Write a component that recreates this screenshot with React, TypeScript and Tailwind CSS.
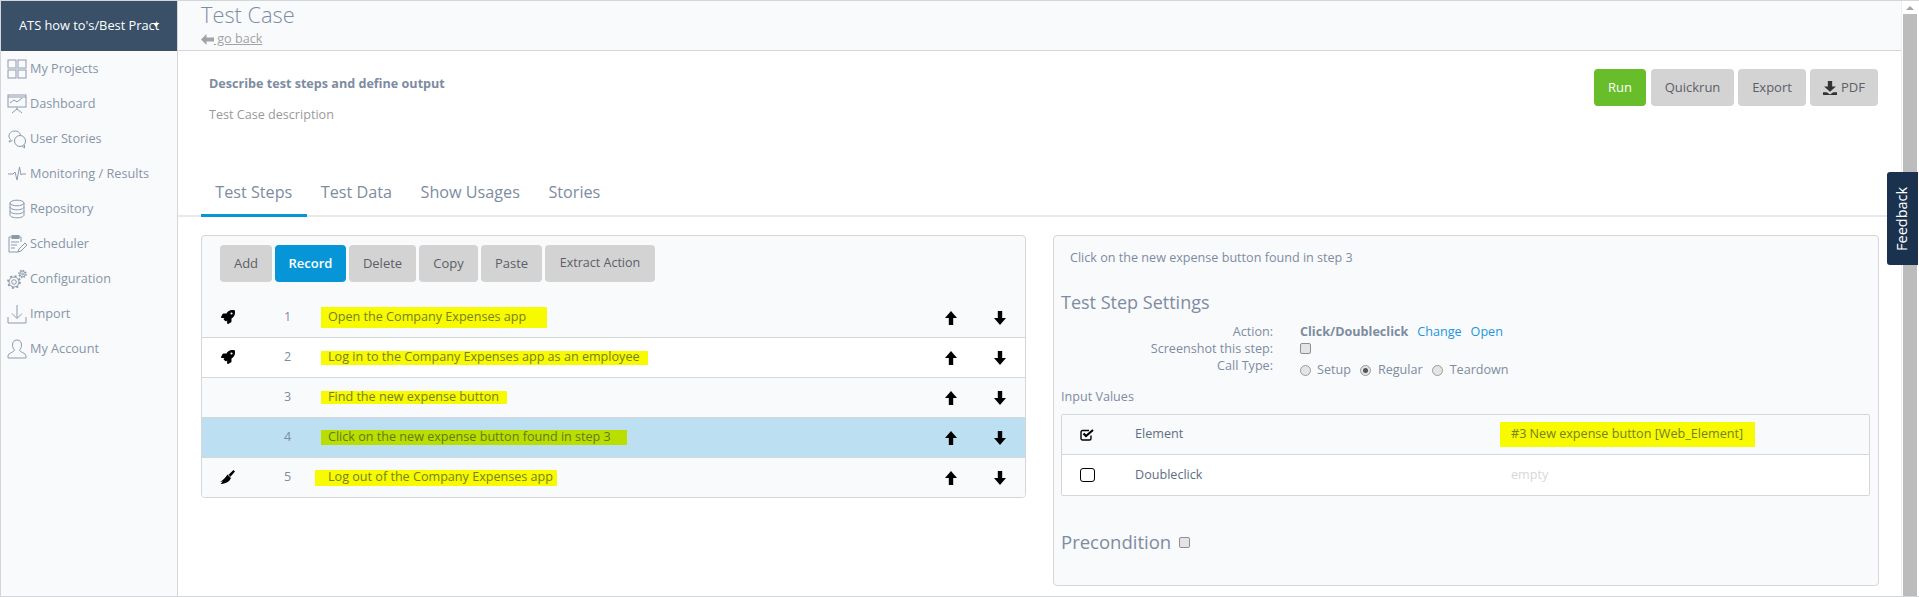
import React from "react";
import { FaRocket } from "react-icons/fa";

const font = { fontFamily: '"Open Sans", "Noto Sans", sans-serif' };

const stroke = { fill: "none", stroke: "#8d9aae", strokeWidth: 1 } as const;
const SideIcons: Record<string, React.ReactNode> = {
  grid: <g {...stroke}><rect x="1" y="1" width="8" height="8" /><rect x="11" y="1" width="8" height="8" /><rect x="1" y="11" width="8" height="8" /><rect x="11" y="11" width="8" height="8" /><path d="M1 9.500h18" stroke="#c5cad3" strokeWidth="2" /></g>,
  dash: <g {...stroke}><rect x="1" y="1" width="18" height="12" /><path d="M3 9l4-3 3 2 5-4M10 13v2M5 19l5-4 5 4" /><path d="M1 3h18" /></g>,
  chat: <g {...stroke}><path d="M8 2c-3.500 0-6 2-6 5 0 1.500.6 2.600 1.500 3.500L2 13l3.500-1.500" /><path d="M8 2c2.500 0 5 1.500 5.500 4" /><circle cx="13" cy="12" r="5.500" /><path d="M15 17l2.500 2v-3" /></g>,
  pulse: <path {...stroke} d="M1 10h5l2-2 2 8 2.500-13L14 11l1-1h4" />,
  db: <g {...stroke}><ellipse cx="10" cy="4" rx="7" ry="2.800" /><path d="M3 4v12c0 1.500 3 2.800 7 2.800s7-1.300 7-2.800V4M3 8c0 1.500 3 2.800 7 2.800s7-1.300 7-2.800M3 12c0 1.500 3 2.800 7 2.800s7-1.300 7-2.800" /></g>,
  sched: <g {...stroke}><path d="M5 3H2v15h9M12 3h2v5" /><rect x="5" y="1.500" width="7" height="3" fill="#8d9aae" /><path d="M4 8h8M4 11h6M4 14h4M11 18l1-3 6-6 2 2-6 6z" /></g>,
  gear: <g {...stroke}><circle cx="7" cy="13" r="5" /><circle cx="7" cy="13" r="6" strokeWidth="1.800" strokeDasharray="2 2.700" /><circle cx="7" cy="13" r="2.300" /><circle cx="15.500" cy="5" r="2.700" /><circle cx="15.500" cy="5" r="3.600" strokeWidth="1.400" strokeDasharray="1.500 1.300" /><circle cx="15.500" cy="5" r="1" /></g>,
  imp: <g {...stroke}><path d="M10 1v13M5 9.500l5 5 5-5M1 13v6h18v-6" /></g>,
  user: <g {...stroke}><path d="M10 1c-3 0-4.500 2-4.500 5 0 2.500 1 4 2 5 0 2-6.500 3-6.500 6v2h18v-2c0-3-6.500-4-6.500-6 1-1 2-2.500 2-5 0-3-1.500-5-4.500-5z" /></g>,
};

const nav: [string, string][] = [
  ["grid", "My Projects"],
  ["dash", "Dashboard"],
  ["chat", "User Stories"],
  ["pulse", "Monitoring / Results"],
  ["db", "Repository"],
  ["sched", "Scheduler"],
  ["gear", "Configuration"],
  ["imp", "Import"],
  ["user", "My Account"],
];

const ArrowUp = () => (
  <svg width="12" height="14" viewBox="0 0 12 14"><path d="M6 0L12 7H8.200V14H3.800V7H0z" fill="#000" /></svg>
);
const ArrowDown = () => (
  <svg width="12" height="14" viewBox="0 0 12 14"><path d="M6 14L12 7H8.200V0H3.800V7H0z" fill="#000" /></svg>
);
const Brush = () => (
  <svg width="15" height="14" viewBox="0 0 15 14"><path d="M13.500 0L15 1.500 10.500 6.800 8.500 4.800z" fill="#000" /><path d="M7.500 4.500L11 8 9.500 10.500C7.500 12.800 4 14 .5 14L2.800 11.500 0 11.800C3 10 5.500 8 7.500 4.500z" fill="#000" /></svg>
);

const Btn = ({ w, children, cls = "bg-[#d3d3d3] text-[#5c6068]" }: { w: string; children: React.ReactNode; cls?: string }) => (
  <button className={`${w} ${cls} h-[37px] rounded-[4px] text-[13px] flex items-center justify-center shrink-0`}>{children}</button>
);

const steps = [
  { n: 1, icon: "rocket", text: "Open the Company Expenses app", hl: "pl-[7px] w-[226px] h-[21px]", bg: "bg-[#f9fafc]" },
  { n: 2, icon: "rocket", text: "Log in to the Company Expenses app as an employee", hl: "pl-[7px] w-[327px] h-[14px]", bg: "bg-white" },
  { n: 3, icon: "", text: "Find the new expense button", hl: "pl-[7px] w-[186px] h-[13px]", bg: "bg-[#f9fafc]" },
  { n: 4, icon: "", text: "Click on the new expense button found in step 3", hl: "pl-[7px] w-[306px] h-[15px]", bg: "bg-[#bce0f2]" },
  { n: 5, icon: "broom", text: "Log out of the Company Expenses app", hl: "-ml-[6px] pl-[13px] w-[242px] h-[16px]", bg: "bg-[#f9fafc]" },
];

export default function App() {
  return (
    <div style={font} className="relative flex h-[597px] w-full overflow-hidden border-y border-l border-[#d4d6da] bg-white text-[13px] text-[#7d8ca1]">
      <aside className="w-[177px] shrink-0 border-r border-[#d4d6da] bg-[#f9fafc]">
        <div className="flex h-[50px] items-center bg-[#3a5068] pb-[1px] pl-[18px] text-[12.800px] text-white">
          <span className="relative whitespace-nowrap">
            ATS how to's/Best Pract
            <span className="absolute right-[0px] top-[7px] h-0 w-0 border-x-[3px] border-t-[4px] border-x-transparent border-t-white" />
          </span>
        </div>
        <nav className="pl-[6px]">
          {nav.map(([k, label]) => (
            <div key={label} className="flex h-[35px] items-center gap-[3px] text-[12.700px] text-[#8795a8]">
              <svg width="20" height="20" viewBox="0 0 20 20" className="shrink-0">{SideIcons[k]}</svg>
              <span>{label}</span>
            </div>
          ))}
        </nav>
      </aside>

      <main className="flex min-w-0 flex-1 flex-col">
        <header className="h-[50px] shrink-0 border-b border-[#d4d6da] bg-[#f9fafc] pl-[23px]">
          <h1 className="-mt-[1px] text-[21.800px] font-light leading-[30px] text-[#7d8ca1]">Test Case</h1>
          <div className="flex items-center text-[12.600px] leading-[18px] text-[#a3a3a3]">
            <svg width="13" height="11" viewBox="0 0 13 11"><path d="M0 5.500L5.500 0v3.500H13v4H5.500V11z" fill="#a3a3a3" /></svg>
            <span className="underline">&nbsp;go back</span>
          </div>
        </header>

        <section className="flex h-[127px] shrink-0 justify-between pl-[31px] pr-[23px] pt-[18px]">
          <div className="pt-[6px]">
            <div className="text-[12.600px] font-bold leading-[18px] text-[#7d8ca1]">Describe test steps and define output</div>
            <div className="mt-[13px] text-[12.600px] leading-[18px] text-[#9a9a9a]">Test Case description</div>
          </div>
          <div className="flex gap-[4px]">
            <Btn w="w-[52px] mr-[1px]" cls="bg-[#67bd2a] text-white">Run</Btn>
            <Btn w="w-[83px]">Quickrun</Btn>
            <Btn w="w-[68px]">Export</Btn>
            <Btn w="w-[68px]">
              <svg width="14" height="14" viewBox="0 0 13 13" className="mr-[4px]"><path d="M4.500 0h4v5H12L6.500 10 1 5h3.500zM0 10.500h3.500l3 2 3-2H13V13H0z" fill="#333" /></svg>
              PDF
            </Btn>
          </div>
        </section>

        <nav className="flex h-[39px] shrink-0 items-start border-b-2 border-[#e8e9ec] pl-[23px] text-[16.200px]">
          {[["Test Steps", true], ["Test Data", false], ["Show Usages", false], ["Stories", false]].map(([t, a]) => (
            <div key={t as string} className={`-mb-[2px] flex h-[39px] items-start px-[14.250px] pt-[2px] leading-[24px] ${a ? "border-b-[3px] border-[#0696d7]" : ""}`}>{t}</div>
          ))}
        </nav>

        <div className="flex items-start gap-[27px] pl-[23px] pr-[22px] pt-[18px]">
          <div className="w-[825px] shrink-0 overflow-hidden rounded-[4px] border border-[#d4d6da] bg-[#f9fafc]">
            <div className="flex gap-[3px] pl-[18px] pt-[9px]">
              <Btn w="w-[52px]">Add</Btn>
              <Btn w="w-[71px]" cls="bg-[#0696d7] font-semibold text-white">Record</Btn>
              <Btn w="w-[67px]">Delete</Btn>
              <Btn w="w-[59px]">Copy</Btn>
              <Btn w="w-[61px]">Paste</Btn>
              <Btn w="w-[110px]"><span className="text-[12.500px]">Extract Action</span></Btn>
            </div>
            <div className="mt-[16px]">
              {steps.map((s, i) => (
                <div key={s.n} className={`grid ${i < 4 ? "h-[40px] border-b border-[#d4d6da]" : "h-[39px]"} grid-cols-[119px_1fr_49px_31px] items-center ${s.bg}`}>
                  <div className="flex items-center pl-[18px]">
                    <span className="flex w-[15px] justify-center text-black">
                      {s.icon === "rocket" && <FaRocket size={14} />}
                      {s.icon === "broom" && <Brush />}
                    </span>
                    <span className="ml-[49px] text-[12.600px] text-[#7d8ca1]">{s.n}</span>
                  </div>
                  <div className="flex items-center">
                    <span className={`flex items-center whitespace-nowrap ${s.hl} ${s.n === 4 ? "bg-[#bade00] text-[#5f7a20]" : "bg-[#f8fa00] text-[#75802a]"} text-[12.600px]`}>{s.text}</span>
                  </div>
                  <div className="flex justify-start"><ArrowUp /></div>
                  <div className="flex justify-start"><ArrowDown /></div>
                </div>
              ))}
            </div>
          </div>

          <div className="h-[351px] w-[826px] shrink-0 rounded-[4px] border border-[#d4d6da] bg-[#f9fafc] pl-[7px] pr-[8px] pt-[13px]">
            <div className="pl-[9px] text-[12.600px] leading-[18px] text-[#7d8ca1]">Click on the new expense button found in step 3</div>
            <h2 className="mt-[23px] text-[18px] leading-[24px] text-[#7d8ca1]">Test Step Settings</h2>
            <div className="mt-[9px] grid grid-cols-[212px_1fr] gap-x-[27px] text-[12.600px]">
              <div className="text-right leading-[17px]">Action:</div>
              <div className="leading-[17px]"><b className="font-bold">Click/Doubleclick</b><span className="ml-[9px] text-[#1b96dc]">Change</span><span className="ml-[9px] text-[#1b96dc]">Open</span></div>
              <div className="text-right leading-[17px]">Screenshot this step:</div>
              <div className="flex h-[17px] items-center"><span className="h-[11px] w-[11px] rounded-[2px] border border-[#8f8f8f] bg-[#e4e4e4]" /></div>
              <div className="text-right leading-[18px]">Call Type:</div>
              <div className="flex h-[24px] items-center pt-[2px]">
                <span className="h-[11px] w-[11px] rounded-full border border-[#9c9c9c] bg-[#e4e4e4]" />
                <span className="ml-[6px]">Setup</span>
                <span className="ml-[9px] flex h-[11px] w-[11px] items-center justify-center rounded-full border border-[#9c9c9c] bg-[#e4e4e4]"><span className="h-[5px] w-[5px] rounded-full bg-[#555]" /></span>
                <span className="ml-[7px]">Regular</span>
                <span className="ml-[9px] h-[11px] w-[11px] rounded-full border border-[#9c9c9c] bg-[#e4e4e4]" />
                <span className="ml-[7px]">Teardown</span>
              </div>
            </div>
            <div className="mt-[7px] text-[12.600px] leading-[18px]">Input Values</div>
            <div className="mt-[8px] overflow-hidden rounded-[2px] border border-[#d4d6da]">
              <div className="flex h-[40px] items-center border-b border-[#d4d6da] bg-[#f9fafc]">
                <svg width="15" height="12" viewBox="0 0 15 12" className="ml-[18px]" fill="none"><path d="M11 6.500V9.500a1.500 1.500 0 0 1-1.500 1.500H2.500A1.500 1.500 0 0 1 1 9.500V3A1.500 1.500 0 0 1 2.500 1.500H9" stroke="#000" strokeWidth="1.400" /><path d="M3.500 4.500L6 7 13 1" stroke="#000" strokeWidth="2.200" /></svg>
                <span className="ml-[40px] w-[365px] text-[12.600px] text-[#5e6e82]">Element</span>
                <span className="flex h-[25px] w-[255px] items-center bg-[#f8fa00] pl-[11px] text-[12.600px] text-[#75802a]">#3 New expense button [Web_Element]</span>
              </div>
              <div className="flex h-[40px] items-center bg-white">
                <span className="ml-[18px] h-[14px] w-[15px] rounded-[3px] border-[1.500px] border-black" />
                <span className="ml-[40px] w-[376px] text-[12.600px] text-[#5e6e82]">Doubleclick</span>
                <span className="text-[12.600px] text-[#d8d8d8]">empty</span>
              </div>
            </div>
            <div className="mt-[34px] flex items-center">
              <h2 className="text-[18.500px] leading-[24px]">Precondition</h2>
              <span className="ml-[8px] h-[11px] w-[11px] rounded-[2px] border border-[#8f8f8f] bg-[#e4e4e4]" />
            </div>
          </div>
        </div>
      </main>

      <div className="flex w-[18px] shrink-0 flex-col border-l border-[#eeeeee] bg-white pl-[1px] pr-[2px]">
        <div className="flex h-[13px] items-center justify-center">
          <span className="h-0 w-0 border-x-[4px] border-b-[4px] border-x-transparent border-b-[#a6a6a6]" />
        </div>
        <div className="flex-1 bg-[#bcbcbc]" />
      </div>

      <div className="absolute right-[1px] top-[171px] flex h-[93px] w-[31px] items-center justify-center rounded-l-[3px] bg-[#1b324f]">
        <span className="-rotate-90 whitespace-nowrap text-[14.500px] font-normal text-white">Feedback</span>
      </div>
    </div>
  );
}
